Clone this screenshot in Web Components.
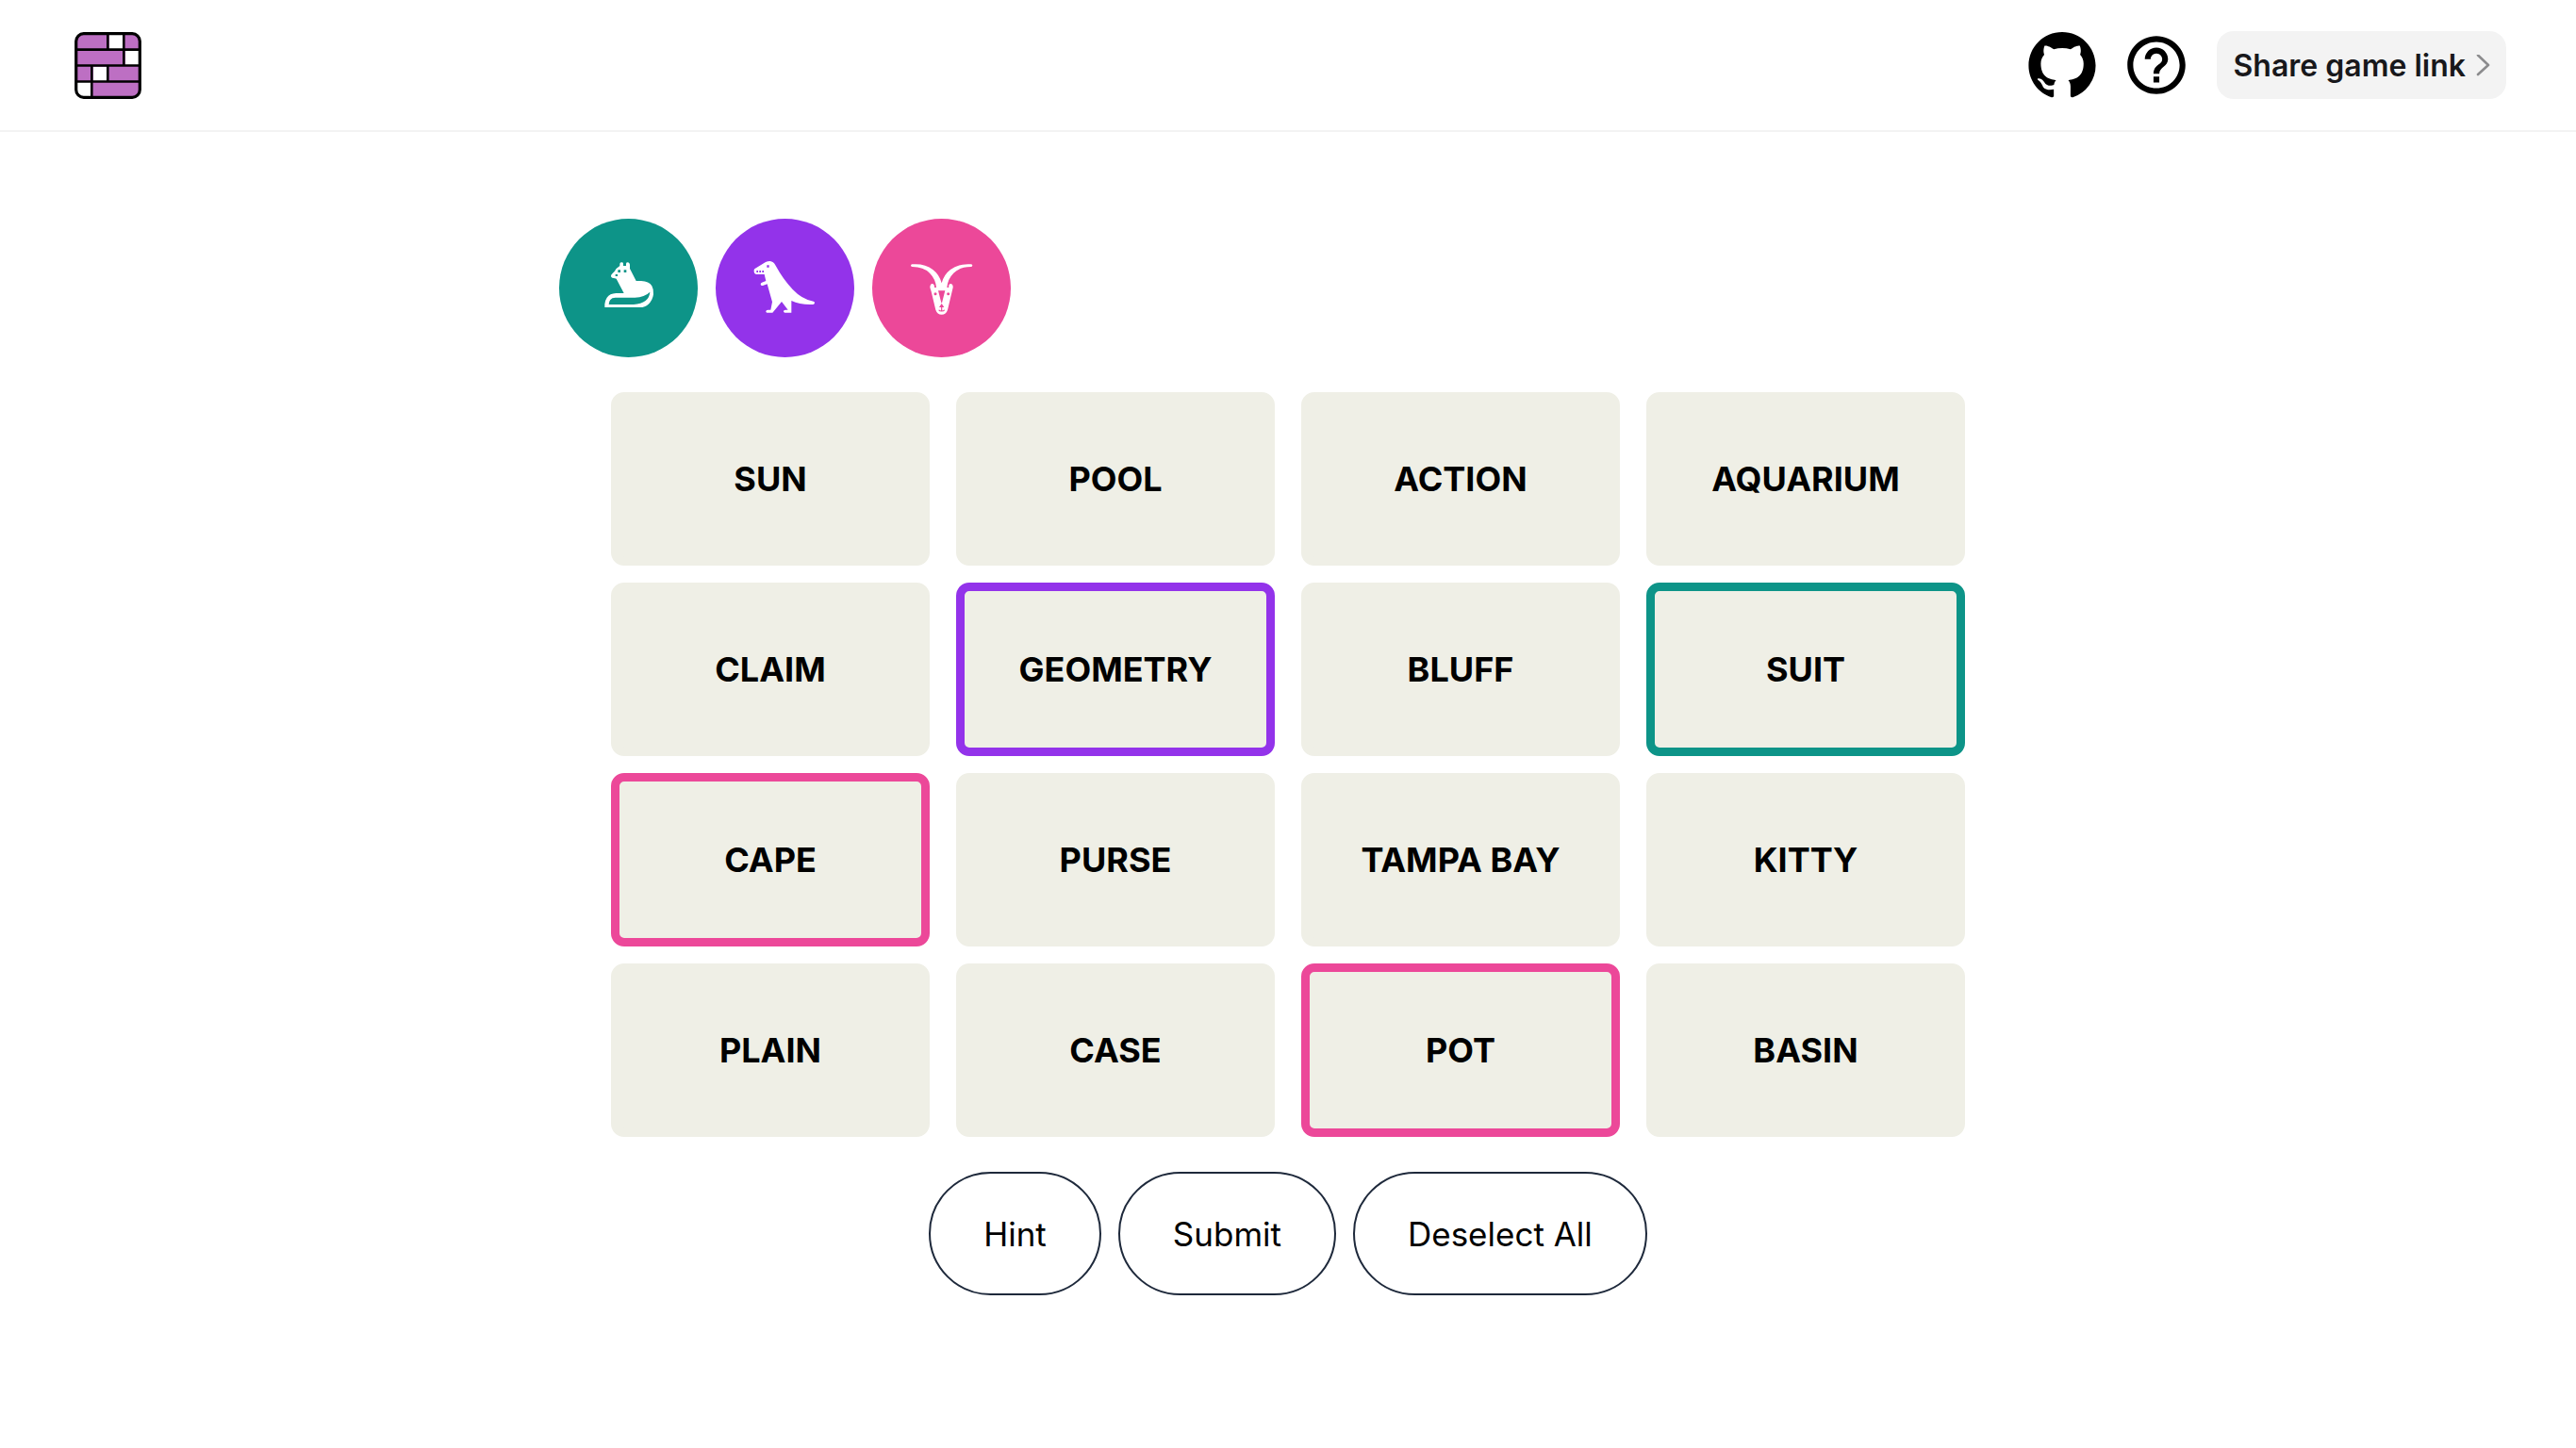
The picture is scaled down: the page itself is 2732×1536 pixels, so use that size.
<!DOCTYPE html>
<html lang="en">
<head>
<meta charset="utf-8">
<meta name="viewport" content="width=device-width, initial-scale=1">
<title>Word groups</title>
<style>
  body { margin: 0; background: #fff; color: #000; font-family: Inter, "Liberation Sans", sans-serif; }
</style>
</head>
<body>
<game-app></game-app>

<template id="header-tpl">
  <style>
    :host { display: block; border-bottom: 2px solid #f3f3f3; }
    header { display: flex; align-items: center; justify-content: space-between; padding: 33px 74px 33px 79px; }
    nav { display: flex; align-items: center; gap: 28px; }
    a { display: block; color: inherit; }
    svg { display: block; }
    .icon { width: 72px; height: 72px; }
    .share { box-sizing: border-box; display: flex; align-items: center; gap: 10px; height: 72px; padding: 2px 17px 0 18px; border: 0; border-radius: 18px;
      background: #f3f3f3; color: #18181b; font: 600 32px/48px Inter, "Liberation Sans", sans-serif; white-space: nowrap; cursor: pointer; }
    .share svg { width: 16px; height: 24px; }
  </style>
  <header>
    <a href="#" aria-label="Home">
      <svg class="icon" viewBox="0 -1 72 72">
        <rect x="1.5" y="1.5" width="68" height="68" rx="8" fill="#bd6fc3"/>
        <path fill="#fff" d="M37 3h14v16H37zM54 20h14v15H54zM20 37h14v15H20zM3 53h15v15H3z"/>
        <path fill="none" stroke="#000" stroke-width="2.6" d="M2 18.600h67M2 35.500h67M2 52.500h67M35.300 2v17M52.300 2v17M52.300 19v17M18.300 36v17M35.300 36v17M18.300 53v16"/>
        <rect x="1.700" y="1.700" width="67.600" height="67.600" rx="8" fill="none" stroke="#000" stroke-width="3.200"/>
      </svg>
    </a>
    <nav>
      <a href="#" aria-label="GitHub">
        <svg class="icon" viewBox="-0.100 -0.200 16.200 16.200"><path d="M8 0C3.58 0 0 3.58 0 8c0 3.54 2.29 6.53 5.47 7.59.4.07.55-.17.55-.38 0-.19-.01-.82-.01-1.49-2.01.37-2.53-.49-2.69-.94-.09-.23-.48-.94-.82-1.13-.28-.15-.68-.52-.01-.53.63-.01 1.08.58 1.23.82.72 1.21 1.87.87 2.33.66.07-.52.28-.87.51-1.07-1.78-.2-3.64-.89-3.64-3.95 0-.87.31-1.59.82-2.15-.08-.2-.36-1.02.08-2.12 0 0 .67-.21 2.2.82.64-.18 1.32-.27 2-.27s1.36.09 2 .27c1.530-1.040 2.200-.82 2.200-.82.44 1.100.16 1.920.08 2.120.51.56.82 1.270.82 2.150 0 3.070-1.870 3.750-3.650 3.950.29.25.54.73.54 1.480 0 1.070-.01 1.930-.01 2.200 0 .21.15.46.55.38A8.010 8.010 0 0 0 16 8c0-4.420-3.580-8-8-8z"/></svg>
      </a>
      <a href="#" aria-label="Help">
        <svg class="icon" viewBox="0.300 0.300 23.400 23.400"><path d="M11 18h2v-2h-2v2zm1-16C6.480 2 2 6.480 2 12s4.480 10 10 10 10-4.480 10-10S17.520 2 12 2zm0 18c-4.410 0-8-3.590-8-8s3.590-8 8-8 8 3.590 8 8-3.590 8-8 8zm0-14c-2.210 0-4 1.790-4 4h2c0-1.100.9-2 2-2s2 .9 2 2c0 2-3 1.750-3 5h2c0-2.250 3-2.500 3-5 0-2.210-1.790-4-4-4z"/></svg>
      </a>
      <button class="share" type="button">Share game link
        <svg viewBox="0 0 16 24" fill="none" stroke="#8b8b8d" stroke-width="2.600" stroke-linecap="round" stroke-linejoin="round"><path d="M3 0.500 14 11 3 21"/></svg>
      </button>
    </nav>
  </header>
</template>

<template id="token-tpl">
  <style>
    :host { display: block; width: 147px; height: 147px; border-radius: 50%; background: var(--token); color: #fff; }
    svg { display: block; width: 100%; height: 100%; fill: currentColor; }
    .cut { fill: var(--token); }
    .cut-line { fill: none; stroke: var(--token); }
  </style>
</template>

<template id="card-tpl">
  <style>
    :host { display: block; }
    button { box-sizing: border-box; display: block; width: 100%; height: 184px; padding: 0; border: 9px solid var(--ring, #efefe6); border-radius: 14px;
      background: #efefe6; color: #000; font: 700 36px/52px Inter, "Liberation Sans", sans-serif; cursor: pointer; }
  </style>
  <button type="button"><slot></slot></button>
</template>

<template id="action-tpl">
  <style>
    :host { display: block; }
    button { box-sizing: border-box; display: block; height: 131px; padding: 0 56px; border: 2px solid #1e293b; border-radius: 66px;
      background: #fff; color: #000; font: 400 35px/52px Inter, "Liberation Sans", sans-serif; cursor: pointer; }
  </style>
  <button type="button"><slot></slot></button>
</template>

<template id="app-tpl">
  <style>
    :host { display: block; }
    main { box-sizing: border-box; max-width: 1546px; margin: 0 auto; padding: 92px 0; display: flex; flex-direction: column; gap: 37px; }
    .tokens { display: flex; gap: 19px; }
    .grid { display: grid; grid-template-columns: repeat(4, 1fr); gap: 18px 28px; margin: 0 55px; }
    .actions { display: flex; justify-content: center; gap: 18px; }
    .teal { --token: #0d9488; --ring: #0d9488; }
    .violet { --token: #9333ea; --ring: #9333ea; }
    .pink { --token: #ec4899; --ring: #ec4899; }
  </style>
  <game-header></game-header>
  <main>
    <div class="tokens">
      <player-token class="teal" animal="fox"></player-token>
      <player-token class="violet" animal="trex"></player-token>
      <player-token class="pink" animal="goat"></player-token>
    </div>
    <div class="grid">
      <word-card>SUN</word-card><word-card>POOL</word-card><word-card>ACTION</word-card><word-card>AQUARIUM</word-card>
      <word-card>CLAIM</word-card><word-card class="violet">GEOMETRY</word-card><word-card>BLUFF</word-card><word-card class="teal">SUIT</word-card>
      <word-card class="pink">CAPE</word-card><word-card>PURSE</word-card><word-card>TAMPA BAY</word-card><word-card>KITTY</word-card>
      <word-card>PLAIN</word-card><word-card>CASE</word-card><word-card class="pink">POT</word-card><word-card>BASIN</word-card>
    </div>
    <div class="actions">
      <action-button>Hint</action-button><action-button>Submit</action-button><action-button>Deselect All</action-button>
    </div>
  </main>
</template>

<script>
  const ANIMALS = {
    fox: `<svg viewBox="39 36 441 441" role="img" aria-label="Fox">
      <path d="M232 186V179Q233 175 238 175Q243 175 243 179V186H252V179Q252 175 258 175Q263 176 264 182V195L284 234H300Q325 235 334 250Q340 260 339 277Q336 297 323 308Q312 318 296 318H184V308Q185 296 191 287Q200 274 220 273H245L221 227Q218 225 208 224Q203 222 204 216Q207 211 215 204Q222 192 232 186Z"/>
      <path class="cut" d="M197 309Q197 300 202 294Q207 287 218 287H280Q311 286 328 269Q327 286 314 297Q300 307 276 309Z"/>
      <path class="cut" d="M226 199h8v8h-8zM245 199h8v8h-8zM218 213h7v6h-7z"/></svg>`,
    trex: `<svg viewBox="27 36 441 441" role="img" aria-label="Dinosaur">
      <path d="M186 174Q192 171 200 171Q211 172 217 184Q242 230 272 261Q302 293 338 299Q342 300 342 304Q342 308 337 309Q297 311 268 297V335H247Q242 334 243 330Q244 326 251 326H257L237 300L208 335H190Q186 333 187 330Q188 326 195 326H202L207 301L191 244L177 249Q171 250 170 245Q170 241 174 239L187 234L182 213H156Q149 211 149 205V200Q149 196 153 194Z"/>
      <path class="cut" d="M190 184h7v7h-7zM157 201h5v6h-5zM166 201h5v6h-5zM175 201h5v6h-5z"/></svg>`,
    goat: `<svg viewBox="42 36 441 441" role="img" aria-label="Goat">
      <path d="M169 181Q210 178 235 198Q256 214 263 241Q270 214 291 198Q316 178 357 181Q361 182 361 185Q360 189 356 189Q321 189 301 209Q282 228 280 255H286Q284 244 291 243Q300 244 299 255L296 268L282 326Q277 341 263 341Q249 341 244 326L230 268L226 255Q226 244 233 243Q241 244 240 255H246Q244 228 225 209Q205 189 170 189Q166 189 165 185Q165 182 169 181Z"/>
      <path class="cut" d="M252 265H274L264 304H262ZM263 306L271 318H255Z"/>
      <circle class="cut" cx="243" cy="275" r="4.500"/><circle class="cut" cx="284" cy="275" r="4.500"/>
      <path class="cut-line" stroke-width="3.500" d="M263 316V329M254 326Q256 330 263 330Q270 330 272 326"/></svg>`
  };

  class TemplateElement extends HTMLElement {
    constructor() {
      super();
      this.attachShadow({ mode: 'open' }).append(document.getElementById(this.constructor.template).content.cloneNode(true));
    }
  }
  class GameHeader extends TemplateElement { static template = 'header-tpl'; }
  class WordCard extends TemplateElement { static template = 'card-tpl'; }
  class ActionButton extends TemplateElement { static template = 'action-tpl'; }
  class PlayerToken extends TemplateElement {
    static template = 'token-tpl';
    connectedCallback() {
      if (!this.shadowRoot.querySelector('svg')) this.shadowRoot.append(
        document.createRange().createContextualFragment(ANIMALS[this.getAttribute('animal')]));
    }
  }
  class GameApp extends TemplateElement { static template = 'app-tpl'; }

  customElements.define('game-header', GameHeader);
  customElements.define('word-card', WordCard);
  customElements.define('action-button', ActionButton);
  customElements.define('player-token', PlayerToken);
  customElements.define('game-app', GameApp);
</script>
</body>
</html>
